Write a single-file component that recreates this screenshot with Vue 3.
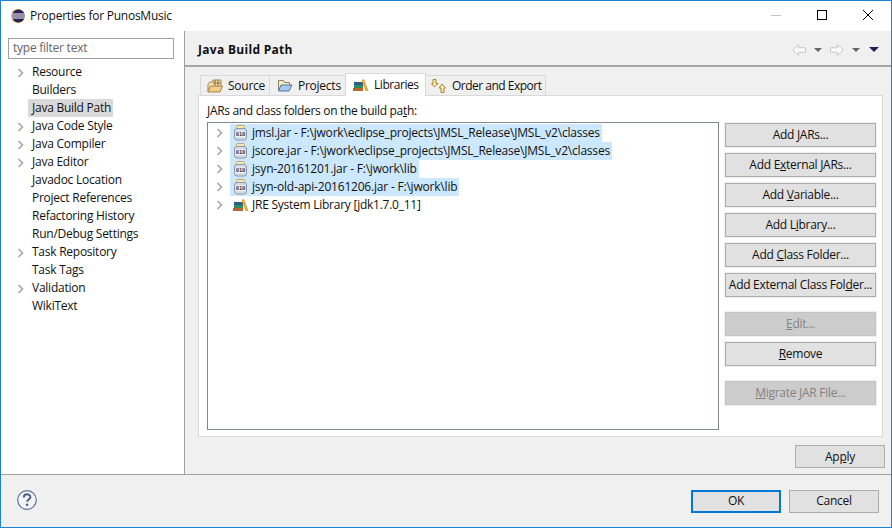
<script setup>
const nav = [
  ['Resource', true], ['Builders', false], ['Java Build Path', false, true], ['Java Code Style', true],
  ['Java Compiler', true], ['Java Editor', true], ['Javadoc Location', false], ['Project References', false],
  ['Refactoring History', false], ['Run/Debug Settings', false], ['Task Repository', true], ['Task Tags', false],
  ['Validation', true], ['WikiText', false]
]
const jars = [
  'jmsl.jar - F:\\jwork\\eclipse_projects\\JMSL_Release\\JMSL_v2\\classes',
  'jscore.jar - F:\\jwork\\eclipse_projects\\JMSL_Release\\JMSL_v2\\classes',
  'jsyn-20161201.jar - F:\\jwork\\lib',
  'jsyn-old-api-20161206.jar - F:\\jwork\\lib'
]
</script>

<template>
  <div class="win">
    <div class="titlebar">
      <svg class="logo" width="14" height="14" viewBox="0 0 14 14">
        <circle cx="7" cy="7" r="7" fill="#e8a33d"/>
        <circle cx="7.400" cy="7" r="6.500" fill="#2c2255"/>
        <rect x="0.500" y="4.500" width="13.500" height="1" fill="#fff"/>
        <rect x="0.500" y="6.500" width="13.500" height="1" fill="#fff"/>
        <rect x="0.500" y="8.500" width="13.500" height="1" fill="#fff"/>
      </svg>
      <span class="title">Properties for PunosMusic</span>
      <span class="spacer"></span>
      <svg class="wbtn" width="46" height="30" viewBox="0 0 46 30"><rect x="18" y="14" width="10" height="1" fill="#c4c4c4"/></svg>
      <svg class="wbtn" width="46" height="30" viewBox="0 0 46 30"><rect x="18.500" y="9.500" width="9" height="9" fill="none" stroke="#000"/></svg>
      <svg class="wbtn" width="46" height="30" viewBox="0 0 46 30"><path d="M18 9l10 10M28 9l-10 10" stroke="#000" fill="none"/></svg>
    </div>

    <div class="main">
      <aside class="side">
        <div class="filter">type filter text</div>
        <ul class="nav">
          <li v-for="n in nav" :key="n[0]" class="navrow">
            <svg v-if="n[1]" class="chev navchev" width="8" height="10" viewBox="0 0 8 10"><path d="M1.500 1l4 4-4 4" fill="none" stroke="#a6a6a6" stroke-width="1.600"/></svg>
            <span :class="['navtext', { sel: n[2] }]">{{ n[0] }}</span>
          </li>
        </ul>
      </aside>

      <section class="content">
        <header class="head">
          <h1>Java Build Path</h1>
          <span class="spacer"></span>
          <svg width="14" height="12" viewBox="0 0 14 12" class="arrow"><path d="M0.800 6l5.700-5.300v3h7v4.600h-7v3z" fill="#fafafa" stroke="#c8c8c8"/></svg>
          <i class="tri"></i>
          <svg width="14" height="12" viewBox="0 0 14 12" class="arrow"><path d="M13.200 6L7.500 0.700v3h-7v4.600h7v3z" fill="#fafafa" stroke="#c8c8c8"/></svg>
          <i class="tri last"></i>
          <i class="tri dark"></i>
        </header>

        <div class="body">
          <div class="tabs">
            <div class="tab t1">
              <svg width="16" height="16" viewBox="0 0 16 16"><path d="M1 14V6l2-2h3V2h8v7" fill="#f6e3b5" stroke="#a8834a"/><path d="M1 14l2.500-6h12L13 14z" fill="#f2cd8a" stroke="#a8834a"/><path d="M8 2v6M11 2v6M6 5h8" stroke="#8a6a3a" fill="none"/></svg>
              <span>Source</span>
            </div>
            <div class="tab t2">
              <svg width="16" height="16" viewBox="0 0 16 16"><path d="M1.500 12V2.500h5l1 2h5V7" fill="#f7edc8" stroke="#8d8160"/><path d="M1.500 13l2.500-6h11l-3 6z" fill="#a9c8ea" stroke="#4c76a8"/></svg>
              <span>Projects</span>
            </div>
            <div class="tab active">
              <svg width="16" height="14" viewBox="0 0 16 14"><rect x="0" y="10" width="10" height="3" fill="#b5652e"/><rect x="1" y="7" width="9" height="3" fill="#2c8a63"/><rect x="1" y="4" width="9" height="3" fill="#2a5f8c"/><path d="M8.500 2L11 1l4.500 12h-3z" fill="#e8a73a"/></svg>
              <span>Libraries</span>
            </div>
            <div class="tab t4">
              <svg width="16" height="16" viewBox="0 0 16 16"><path d="M2 1.500h3v4h2L3.500 9 0.500 5.500h1.500z" fill="#fbeeb5" stroke="#a8842f"/><path d="M11 6l3.500 4H13v4.500h-3V10H8z" fill="#fbeeb5" stroke="#a8842f"/></svg>
              <span>Order and Export</span>
            </div>
          </div>

          <div class="panel">
            <div class="lbl">JARs and class folders on the build pa<u>t</u>h:</div>
            <div class="cols">
              <div class="tree">
                <div v-for="j in jars" :key="j" class="row">
                  <svg class="chev" width="8" height="10" viewBox="0 0 8 10"><path d="M1.500 1l4 4-4 4" fill="none" stroke="#a6a6a6" stroke-width="1.600"/></svg>
                  <span class="selrow">
                    <svg class="jar" width="13" height="16" viewBox="0 0 13 16">
                      <rect x="2.500" y="0.500" width="8" height="3" rx="1" fill="#f7e7b0" stroke="#b9a873"/>
                      <rect x="0.500" y="3.500" width="12" height="11.500" rx="2.500" fill="#d5dae3" stroke="#8d97a8"/>
                      <rect x="1.500" y="6.500" width="10" height="5.500" fill="#f5f6f8"/>
                      <text x="6.500" y="11.200" text-anchor="middle" class="bits">010</text>
                    </svg>
                    <span>{{ j }}</span>
                  </span>
                </div>
                <div class="row">
                  <svg class="chev" width="8" height="10" viewBox="0 0 8 10"><path d="M1.500 1l4 4-4 4" fill="none" stroke="#a6a6a6" stroke-width="1.600"/></svg>
                  <span class="selrow plain">
                    <svg class="jar" width="16" height="14" viewBox="0 0 16 14"><rect x="0" y="10" width="10" height="3" fill="#b5652e"/><rect x="1" y="7" width="9" height="3" fill="#2c8a63"/><rect x="1" y="4" width="9" height="3" fill="#2a5f8c"/><path d="M8.500 2L11 1l4.500 12h-3z" fill="#e8a73a"/></svg>
                    <span>JRE System Library [jdk1.7.0_11]</span>
                  </span>
                </div>
              </div>

              <div class="btns">
                <button>Add <u>J</u>ARs...</button>
                <button>Add E<u>x</u>ternal JARs...</button>
                <button>Add <u>V</u>ariable...</button>
                <button>Add L<u>i</u>brary...</button>
                <button>Add <u>C</u>lass Folder...</button>
                <button>Add External Class Fol<u>d</u>er...</button>
                <button class="dis gap"><u>E</u>dit...</button>
                <button><u>R</u>emove</button>
                <button class="dis gap2"><u>M</u>igrate JAR File...</button>
              </div>
            </div>
          </div>

          <div class="applyrow"><button class="big">Ap<u>p</u>ly</button></div>
        </div>
      </section>
    </div>

    <footer class="foot">
      <svg width="20" height="20" viewBox="0 0 20 20" class="help">
        <circle cx="10" cy="10" r="9.300" fill="#f4f5f8" stroke="#5f7396" stroke-width="1.200"/>
        <path d="M6.800 7.500c0-4.200 6.600-4.200 6.600-.4 0 2.300-3.300 2.500-3.300 4.700" fill="none" stroke="#4a5f85" stroke-width="2"/>
        <circle cx="10.100" cy="14.800" r="1.300" fill="#4a5f85"/>
      </svg>
      <span class="spacer"></span>
      <button class="big ok">OK</button>
      <button class="big cancel">Cancel</button>
    </footer>
  </div>
</template>

<style>
html, body { margin: 0; background: #fff; }
</style>

<style scoped>
.win { width: 892px; height: 528px; box-sizing: border-box; border: 1px solid #1a83d4; display: flex; flex-direction: column; font: 12px/16px "Open Sans", "Noto Sans", sans-serif; color: #111; background: #f0f0f0; overflow: hidden; letter-spacing: -0.25px; }
.titlebar { height: 30px; background: #fff; display: flex; align-items: center; padding-left: 10px; flex: none; }
.title { margin-left: 5px; }
.spacer { flex: 1; }
.wbtn { display: block; }
.main { flex: 1; display: flex; min-height: 0; border-bottom: 1px solid #a0a0a0; }
.side { background: #fff; border-right: 1px solid #a0a0a0; flex: none; padding: 7px 0 0 7px; width: 176px; }
.filter { height: 19px; border: 1px solid #a0a0a0; color: #666; line-height: 18px; padding-left: 4px; width: 160px; }
.nav { list-style: none; margin: 4px 0 0; padding: 0; }
.navrow { height: 18px; line-height: 18px; position: relative; padding-left: 20px; }
.navchev { position: absolute; left: 9px; top: 5px; }
.navtext { display: inline-block; padding: 0 2px 0 4px; height: 18px; }
.navtext.sel { background: #d9d9d9; }
.chev { display: block; flex: none; }
.content { flex: 1; min-width: 0; display: flex; flex-direction: column; }
.head { flex: none; display: flex; align-items: center; border-bottom: 2px solid #a8a8a8; padding: 3px 12px 0 13px; box-sizing: border-box; height: 36px; }
.head h1 { font-size: 12px; font-weight: 700; margin: 0; color: #111; letter-spacing: 0.3px; }
.arrow { margin-right: 8px; }
.tri { width: 0; height: 0; border-left: 4px solid transparent; border-right: 4px solid transparent; border-top: 4px solid #666; margin-right: 8px; }
.tri.last { margin-right: 9px; }
.tri.dark { border-left-width: 5px; border-right-width: 5px; border-top: 5px solid #2c1c55; margin: 0; }
.body { flex: 1; padding: 6px 0 0 13px; display: flex; flex-direction: column; min-height: 0; }
.tabs { display: flex; height: 22px; margin-left: 2px; align-items: flex-end; position: relative; z-index: 1; flex: none; }
.tab { height: 20px; display: flex; align-items: center; gap: 5px; background: #f0f0f0; border: 1px solid #d9d9d9; border-bottom: 0; box-sizing: border-box; white-space: nowrap; margin-right: -1px; }
.t1 { width: 70px; padding-left: 6px; }
.t2 { width: 77px; padding-left: 7px; }
.t4 { width: 121px; padding-left: 5px; letter-spacing: -0.5px; }
.tab.active { height: 23px; background: #fff; width: 81px; padding-left: 7px; margin-bottom: -1px; position: relative; z-index: 1; letter-spacing: -0.45px; }
.panel { width: 685px; height: 342px; box-sizing: border-box; background: #fff; border: 1px solid #d9d9d9; padding: 6px 8px 0; flex: none; }
.lbl { height: 20px; line-height: 18px; letter-spacing: -0.32px; }
.cols { display: flex; }
.tree { width: 512px; height: 308px; box-sizing: border-box; border: 1px solid #828790; padding-top: 1px; flex: none; }
.row { height: 18px; display: flex; align-items: center; padding-left: 8px; }
.selrow { margin-left: 6px; height: 18px; display: inline-flex; align-items: center; background: #cce8ff; padding-right: 2px; white-space: nowrap; letter-spacing: -0.2px; }
.selrow.plain { background: none; margin-left: 7px; letter-spacing: -0.25px; }
.jar { margin: 0 5px 0 4px; flex: none; }
.plain .jar { margin: 0 3px 0 2px; }
.bits { font: 700 5.500px/1 "DejaVu Sans Mono", monospace; fill: #2f3a55; letter-spacing: -0.2px; }
.btns { margin: 1px 0 0 6px; width: 151px; display: flex; flex-direction: column; gap: 6px; flex: none; }
button { font: inherit; letter-spacing: -0.28px; color: #111; height: 24px; padding: 0; background: #e1e1e1; border: 1px solid #adadad; box-sizing: border-box; white-space: nowrap; }
.btns button { box-shadow: 0 0 0 1px #f0f0f0; }
.dis { background: #ccc; color: #838383; border-color: #c4c4c4; }
.gap { margin-top: 9px; }
.gap2 { margin-top: 9px; }
.applyrow { display: flex; justify-content: flex-end; padding: 8px 6px 0 0; }
.big { width: 90px; height: 23px; }
.foot { height: 52px; display: flex; align-items: center; flex: none; padding: 0 12px 0 16px; box-sizing: border-box; }
.help { margin-bottom: 2px; }
.ok { border: 2px solid #0078d7; margin-right: 8px; }
</style>
